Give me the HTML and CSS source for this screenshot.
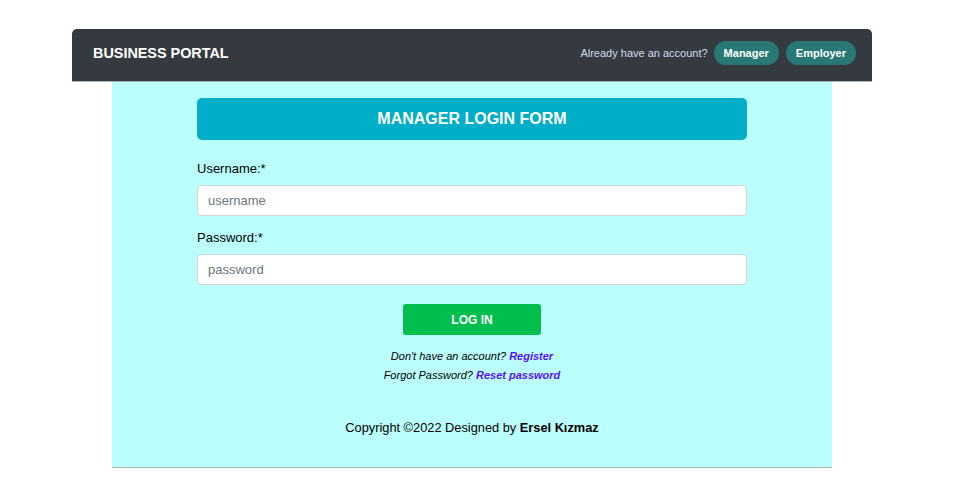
FILE: index.html
```html
<!DOCTYPE html>
<html lang="en">
<head>
<meta charset="utf-8">
<title>Business Portal</title>
<link rel="stylesheet" href="styles.css">
</head>
<body>
<div class="page">
  <nav class="navbar">
    <span class="brand">BUSINESS PORTAL</span>
    <div class="nav-right">
      <span class="nav-text">Already have an account?</span>
      <a class="pill" href="#">Manager</a>
      <a class="pill" href="#">Employer</a>
    </div>
  </nav>
  <main class="main">
    <form class="form">
      <div class="form-title">MANAGER LOGIN FORM</div>
      <label class="label" for="u">Username:*</label>
      <input class="input" id="u" type="text" placeholder="username">
      <label class="label label-2" for="p">Password:*</label>
      <input class="input" id="p" type="password" placeholder="password">
      <div class="actions">
        <button class="login" type="button">LOG IN</button>
      </div>
      <p class="note note-1">Don't have an account? <a href="#">Register</a></p>
      <p class="note note-2">Forgot Password? <a href="#">Reset password</a></p>
    </form>
    <footer class="footer">Copyright ©2022 Designed by <b>Ersel Kızmaz</b></footer>
  </main>
</div>
</body>
</html>
```
FILE: styles.css
```css
* { box-sizing: border-box; }
html, body { margin: 0; padding: 0; background: #fff; }
body { font-family: "Liberation Sans", Arial, sans-serif; color: #000; }

.page {
  width: 800px;
  margin: 29px 0 0 72px;
}

.navbar {
  height: 53px;
  background: #343a40;
  border-radius: 5px 5px 0 0;
  border-bottom: 1px solid #a9b0b8;
  display: flex;
  align-items: center;
  justify-content: space-between;
  padding: 0 16px 4px 21px;
}
.brand {
  color: #fff;
  font-weight: bold;
  font-size: 14.4px;
}
.nav-right {
  display: flex;
  align-items: center;
}
.nav-text {
  color: #d3dcec;
  font-size: 11px;
  margin-right: 6px;
}
.pill {
  display: inline-flex;
  align-items: center;
  justify-content: center;
  height: 24px;
  padding: 0 10px;
  border-radius: 12px;
  background: #287975;
  color: #fff;
  font-weight: bold;
  font-size: 11px;
  text-decoration: none;
  margin-left: 7px;
}
.pill:first-of-type { margin-left: 0; }

.main {
  width: 720px;
  margin: 0 auto;
  background: #bbfffd;
  border-bottom: 1px solid #a3b4b8;
  padding: 16px 0 0;
  height: 386px;
}

.form {
  width: 550px;
  margin: 0 auto;
  display: flex;
  flex-direction: column;
}
.form-title {
  height: 42px;
  border-radius: 5px;
  background: #00aec7;
  color: #fff;
  font-weight: bold;
  font-size: 16px;
  display: flex;
  align-items: center;
  justify-content: center;
}
.label {
  font-size: 13px;
  line-height: 16px;
  margin-top: 21px;
  margin-bottom: 8px;
}
.label-2 { margin-top: 14px; }
.input {
  height: 31px;
  width: 100%;
  border: 1px solid #ced4da;
  border-radius: 4px;
  background: #fff;
  padding: 0 10px;
  font-family: "Liberation Sans", Arial, sans-serif;
  font-size: 13px;
  outline: none;
}
.input::placeholder { color: #6c757d; }

.actions {
  display: flex;
  justify-content: center;
  margin-top: 19px;
}
.login {
  width: 138px;
  height: 31px;
  border: none;
  border-radius: 3px;
  background: #00bf4c;
  color: #fff;
  font-family: "Liberation Sans", Arial, sans-serif;
  font-weight: bold;
  font-size: 12px;
}

.note {
  margin: 0;
  text-align: center;
  font-style: italic;
  font-size: 11px;
  line-height: 14px;
}
.note-1 { margin-top: 14px; }
.note-2 { margin-top: 5px; }
.note a {
  color: #5a10f5;
  font-weight: bold;
  text-decoration: none;
}

.footer {
  text-align: center;
  font-size: 12.8px;
  margin-top: 38px;
}
```
